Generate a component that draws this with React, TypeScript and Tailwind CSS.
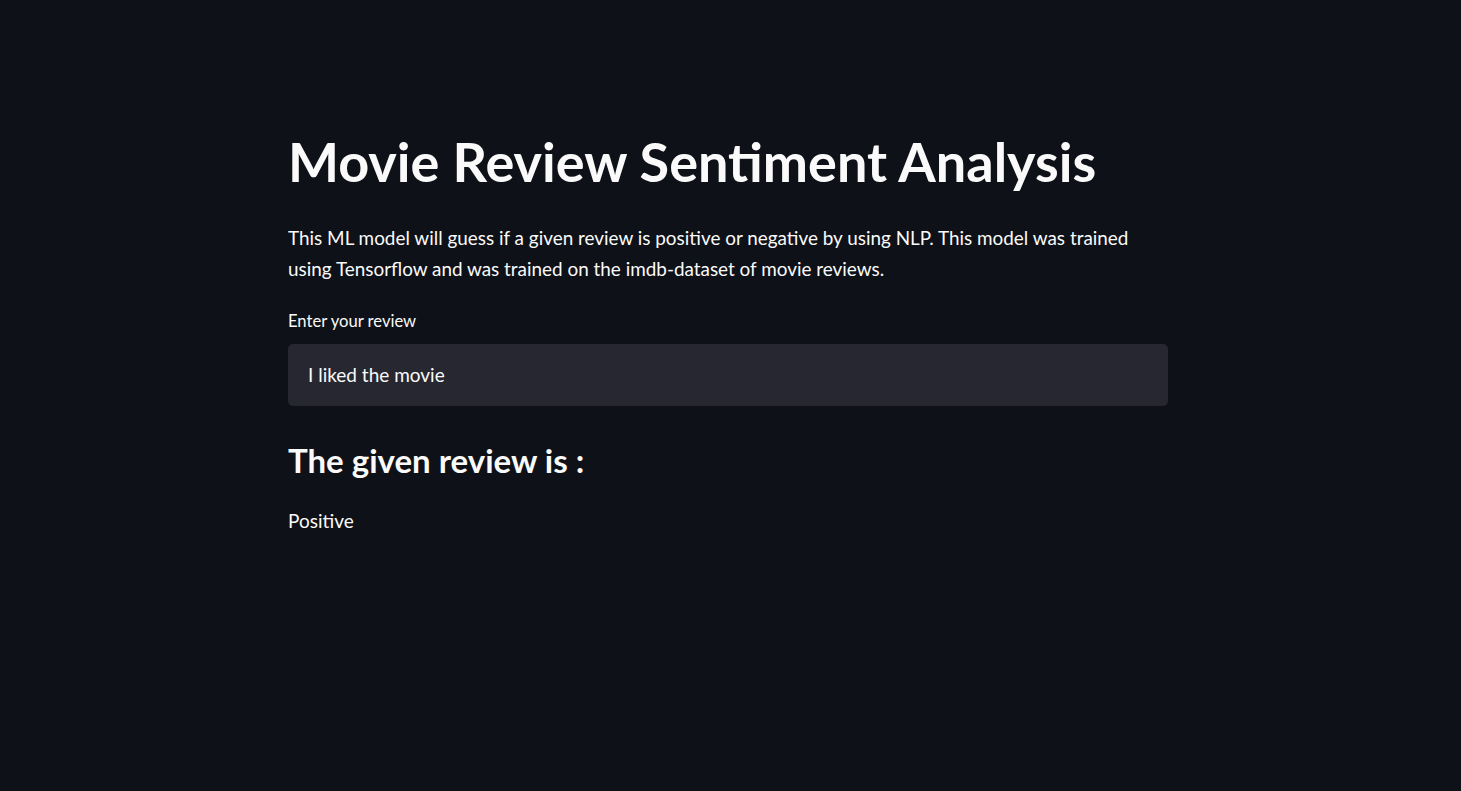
export default function App() {
  return (
    <div className="min-h-screen w-full bg-[#0e1117] text-[#fafafa] font-['Lato',sans-serif]">
      <main className="ml-[288px] w-[880px] pt-[130px]">
        <h1 className="text-[54px] font-bold leading-[1.2]">
          Movie Review Sentiment Analysis
        </h1>
        <p className="mt-[27px] text-[18.9px] leading-[31px]">
          This ML model will guess if a given review is positive or negative by using NLP. This model was trained
          using Tensorflow and was trained on the imdb-dataset of movie reviews.
        </p>
        <label className="mt-[26px] block text-[16.6px] leading-[22px]">Enter your review</label>
        <div className="mt-[12px] flex h-[62px] items-center rounded-[5px] bg-[#262730] px-[20px] text-[19px]">
          I liked the movie
        </div>
        <h3 className="mt-[35px] text-[33px] font-bold leading-[1.2]">The given review is :</h3>
        <p className="mt-[25px] text-[19px] leading-[31px]">Positive</p>
      </main>
    </div>
  );
}
